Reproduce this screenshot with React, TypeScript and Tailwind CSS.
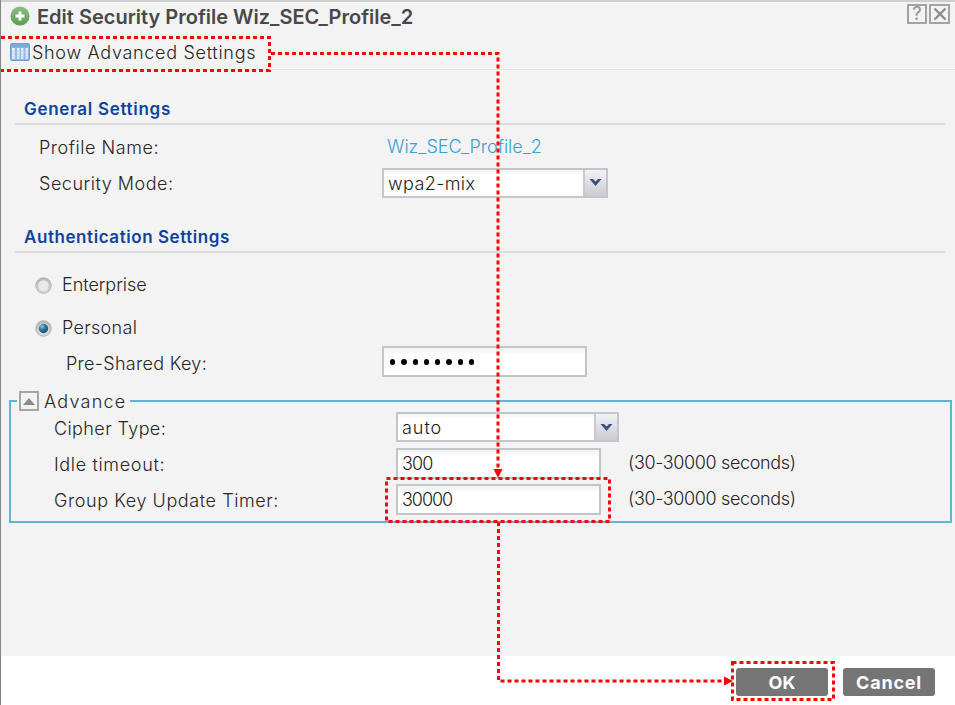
import React, { useState } from "react";
import clsx from "clsx";

function SelectBox({ value, className }: { value: string; className: string }) {
  return (
    <div className={clsx("flex h-[30px] border-2 border-[#c2c5ca] bg-white bg-linear-to-b from-[#f1f2f3] from-0% to-white to-20% text-[#222]", className)}>
      <span className="flex-1 pl-1 leading-[27px]">{value}</span>
      <span className="flex w-[23px] items-center justify-center border-l-2 border-[#c6cad1] bg-linear-to-b from-[#f1f2f5] to-[#c9ccd3]">
        <svg width="13" height="9" viewBox="0 0 13 9">
          <path d="M0.5 1H4L6.5 3.6L9 1H12.5L6.5 8Z" fill="#3c4f82" />
        </svg>
      </span>
    </div>
  );
}

function TextBox({ value, className }: { value: string; className?: string }) {
  return (
    <div className={clsx("h-[31px] w-[205px] border-2 border-[#c2c5ca] bg-linear-to-b from-[#f0f1f2] from-0% to-white to-25% pl-1 leading-[28px] text-[#222]", className)}>
      {value}
    </div>
  );
}

function Radio({ checked, label, onSelect, className }: { checked: boolean; label: string; onSelect: () => void; className: string }) {
  return (
    <button onClick={onSelect} className={clsx("flex items-center pl-5", className)}>
      <svg width="17" height="17" viewBox="0 0 17 17" className="mt-[3px]">
        <defs>
          <linearGradient id="radioRim" x1="0" y1="0" x2="0" y2="1">
            <stop offset="0" stopColor="#b5b5b5" />
            <stop offset="1" stopColor="#dcdcdc" />
          </linearGradient>
          <radialGradient id="radioDot" cx="0.35" cy="0.3" r="0.8">
            <stop offset="0" stopColor="#8ccbe6" />
            <stop offset="0.4" stopColor="#2f7b9f" />
            <stop offset="1" stopColor="#12496a" />
          </radialGradient>
        </defs>
        <circle cx="8.5" cy="8.5" r="7.7" fill="url(#radioRim)" stroke="#adadad" />
        <circle cx="8.5" cy="8.5" r="5.2" fill="#e9e9e9" />
        {checked && <circle cx="8.5" cy="8.5" r="4.7" fill="url(#radioDot)" />}
      </svg>
      <span className="ml-[10px]">{label}</span>
    </button>
  );
}

function Annotations() {
  return (
    <svg width="955" height="705" viewBox="0 0 955 705" className="pointer-events-none absolute top-0 -left-px">
      <g fill="none" stroke="#f60505" strokeWidth="3" strokeDasharray="4 3">
        <path d="M1 37.5H269.5V70.5H1" />
        <path d="M271 53.5H498V468" />
        <rect x="386.5" y="478.5" width="223" height="43" />
        <path d="M498.5 522V681H724" />
        <rect x="732.5" y="662.5" width="101" height="37" />
      </g>
      <path d="M493.5 469H502.5L498 478Z" fill="#f60505" />
      <path d="M724 676.5V685.5L733 681Z" fill="#f60505" />
    </svg>
  );
}

export default function App() {
  const [mode, setMode] = useState("personal");

  return (
    <div className="relative flex h-[705px] w-[955px] flex-col overflow-hidden border-l border-[#858585] bg-white font-['Inter','Liberation_Sans',sans-serif] text-[18px] font-[350] text-[#262626]">
      <div className="flex h-[656px] flex-col bg-[#f3f3f3]">
        <div className="flex h-[34px] shrink-0 items-center border-t-2 border-[#cfcfcf] pr-[5px] pl-[9px]">
          <svg width="20" height="20" viewBox="0 0 20 20" className="-mt-1">
            <defs>
              <linearGradient id="addIcon" x1="0" y1="0" x2="0" y2="1">
                <stop offset="0" stopColor="#8cbc85" />
                <stop offset="1" stopColor="#5b9c4f" />
              </linearGradient>
            </defs>
            <circle cx="10" cy="10" r="9.5" fill="url(#addIcon)" />
            <path d="M10 5.5V14.5M5.5 10H14.5" stroke="#fff" strokeWidth="3" />
          </svg>
          <h1 className="-mt-[2px] ml-[7px] text-[20px] font-semibold text-[#484848]">Edit Security Profile Wiz_SEC_Profile_2</h1>
          <div className="-mt-2 ml-auto flex gap-[2px]">
            <button className="flex size-5 items-center justify-center border-2 border-[#a3a3a3] text-[18px] leading-4 font-medium text-[#9a9a9a]">?</button>
            <button className="flex h-5 w-[21px] items-center justify-center border-2 border-[#a3a3a3]">
              <svg width="14" height="14" viewBox="0 0 14 14">
                <path d="M1.5 1.5L12.5 12.5M12.5 1.5L1.5 12.5" stroke="#8c8c8c" strokeWidth="2.4" />
              </svg>
            </button>
          </div>
        </div>

        <div className="flex h-9 shrink-0 items-center border-b border-[#e2e2e2] pl-[9px]">
          <svg width="20" height="18" viewBox="0 0 20 18">
            <rect x="0.5" y="0.5" width="19" height="17" rx="1.5" fill="#8db4e4" stroke="#739bcf" />
            <rect x="1" y="1" width="18" height="3" fill="#7ea7dc" />
            <path d="M2 5H5V16H2ZM7 5H9.5V16H7ZM11 5H13.500V16H11ZM15.500 5H18V16H15.500Z" fill="#e3effc" />
            <path d="M2 8H18M2 11H18M2 14H18" stroke="#a9c8ee" strokeWidth="0.7" />
          </svg>
          <span className="mt-[2px] ml-[2px] tracking-[0.7px]">Show Advanced Settings</span>
        </div>

        <div className="pr-[10px] pl-[14px]">
          <h2 className="mt-[23px] h-8 border-b-2 border-[#dcdcdc] pl-[9px] text-[17px] leading-8 font-semibold tracking-[0.7px] text-[#0f439b]">General Settings</h2>
          <div className="mt-1 flex h-9 items-center pl-6">
            <span className="w-[348px] tracking-[0.54px]">Profile Name:</span>
            <span className="-mt-[2px] text-[#35a1d4]">Wiz_SEC_Profile_2</span>
          </div>
          <div className="flex h-9 items-center pl-6">
            <span className="w-[343px] tracking-[0.52px]">Security Mode:</span>
            <SelectBox value="wpa2-mix" className="-mt-[1px] w-[226px] tracking-[0.4px]" />
          </div>

          <h2 className="mt-[21px] h-[31px] border-b-2 border-[#dcdcdc] pl-[9px] text-[17px] leading-[31px] font-semibold tracking-[0.57px] text-[#0f439b]">Authentication Settings</h2>
          <Radio checked={mode === "enterprise"} label="Enterprise" onSelect={() => setMode("enterprise")} className="mt-[13px] h-9 tracking-[-0.05px]" />
          <Radio checked={mode === "personal"} label="Personal" onSelect={() => setMode("personal")} className="mt-[7px] h-9 tracking-[0.3px]" />
          <div className="flex h-9 items-center pl-[51px]">
            <span className="w-[316px] tracking-[0.3px]">Pre-Shared Key:</span>
            <div className="-mt-[3px] flex h-[31px] w-[205px] items-center gap-[6px] border-2 border-[#c2c5ca] bg-linear-to-b from-[#f0f1f2] from-0% to-white to-25% pl-[6px]">
              {Array.from({ length: 8 }, (_, i) => (
                <span key={i} className="h-[6px] w-[5.3px] rounded-full bg-black" />
              ))}
            </div>
          </div>
        </div>

        <fieldset className="mt-[10px] mr-[3px] ml-2 h-[132px] border-2 border-[#5bb6d8]">
          <legend className="ml-[6px] flex h-5 items-center gap-[5px] pr-[3px] pl-[2px]">
            <span className="flex size-5 items-center justify-center border-2 border-[#a5a5a5]">
              <svg width="12" height="7" viewBox="0 0 12 7">
                <path d="M6 0L12 7H0Z" fill="#8b8b8b" />
              </svg>
            </span>
            <span className="mt-[1px] tracking-[1.25px]">Advance</span>
          </legend>
          <div className="-mt-[1px] flex h-9 items-center pl-[43px]">
            <span className="w-[342px] tracking-[0.4px]">Cipher Type:</span>
            <SelectBox value="auto" className="-mt-[2px] w-[223px] tracking-[0.95px]" />
          </div>
          <div className="flex h-9 items-center pl-[43px]">
            <span className="w-[342px] tracking-[0.65px]">Idle timeout:</span>
            <TextBox value="300" className="-mt-[1px] tracking-[-0.95px]" />
            <span className="-mt-[3px] ml-[27px] tracking-[-0.36px]">(30-30000 seconds)</span>
          </div>
          <div className="flex h-9 items-center pl-[43px]">
            <span className="w-[342px] tracking-[0.58px]">Group Key Update Timer:</span>
            <TextBox value="30000" className="-mt-[1px] tracking-[-1.05px]" />
            <span className="-mt-[3px] ml-[27px] tracking-[-0.36px]">(30-30000 seconds)</span>
          </div>
        </fieldset>
      </div>

      <div className="flex justify-end gap-[15px] pt-3 pr-5 font-bold text-white">
        <button className="h-7 w-[92px] rounded-[3px] bg-[#757575] leading-[30px]">OK</button>
        <button className="h-7 w-[92px] rounded-[3px] bg-[#757575] leading-[30px] tracking-[0.8px]">Cancel</button>
      </div>

      <Annotations />
    </div>
  );
}
